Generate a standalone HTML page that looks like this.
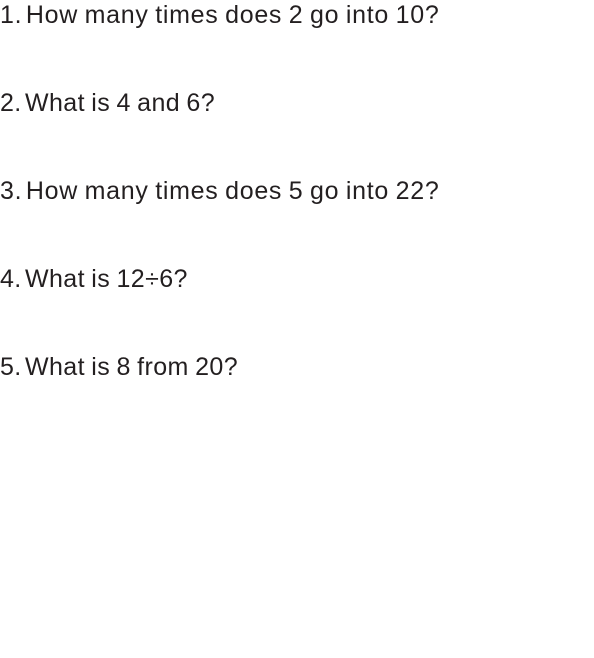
<!DOCTYPE html>
<html><head><meta charset="utf-8"><style>
html,body{margin:0;padding:0;background:#fff;width:594px;height:658px;overflow:hidden}
div{position:absolute;left:0;font-family:"Liberation Sans",sans-serif;font-size:25px;line-height:25px;color:#231f20;white-space:nowrap;letter-spacing:0.4px;word-spacing:-1px}
span{margin-right:-3px}
.l{letter-spacing:0.7px}
</style></head><body>
<div class="l" style="top:3px"><span>1.</span> How many times does 2 go into 10?</div>
<div style="top:91px"><span>2.</span> What is 4 and 6?</div>
<div class="l" style="top:179px"><span>3.</span> How many times does 5 go into 22?</div>
<div style="top:267px"><span>4.</span> What is 12÷6?</div>
<div style="top:355px"><span>5.</span> What is 8 from 20?</div>
</body></html>
